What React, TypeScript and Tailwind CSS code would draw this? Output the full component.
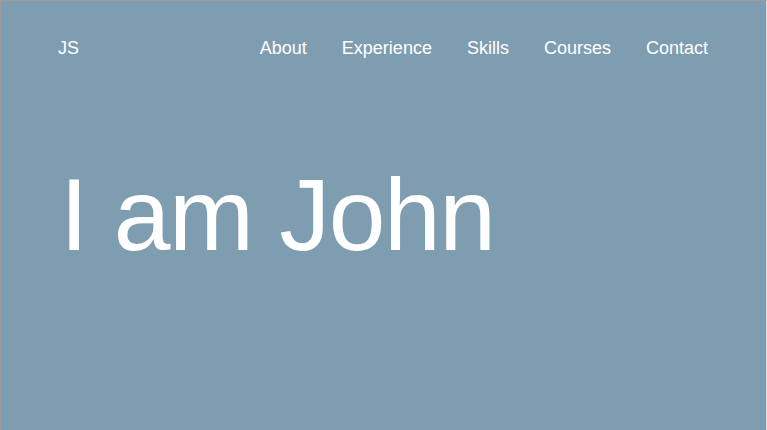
export default function App() {
  const links = ["About", "Experience", "Skills", "Courses", "Contact"];
  return (
    <div
      className="h-[430px] w-[767px] overflow-hidden border-t border-l border-r border-t-[#9b9b9b] border-l-[#9b9b9b] border-r-[#dcdcdc] bg-[#7f9db0] text-white"
      style={{ fontFamily: '"Liberation Sans", Arial, sans-serif' }}
    >
      <nav className="flex items-center justify-between pl-[57px] pr-[58px] pt-[38px]">
        <a className="text-[18px] leading-none">JS</a>
        <ul className="flex gap-[35px]">
          {links.map((l) => (
            <li key={l} className="text-[18px] leading-none">
              {l}
            </li>
          ))}
        </ul>
      </nav>
      <h1 className="mt-[107px] pl-[59px] text-[102px] leading-none font-normal tracking-[-1.5px]">
        I am John
      </h1>
    </div>
  );
}
